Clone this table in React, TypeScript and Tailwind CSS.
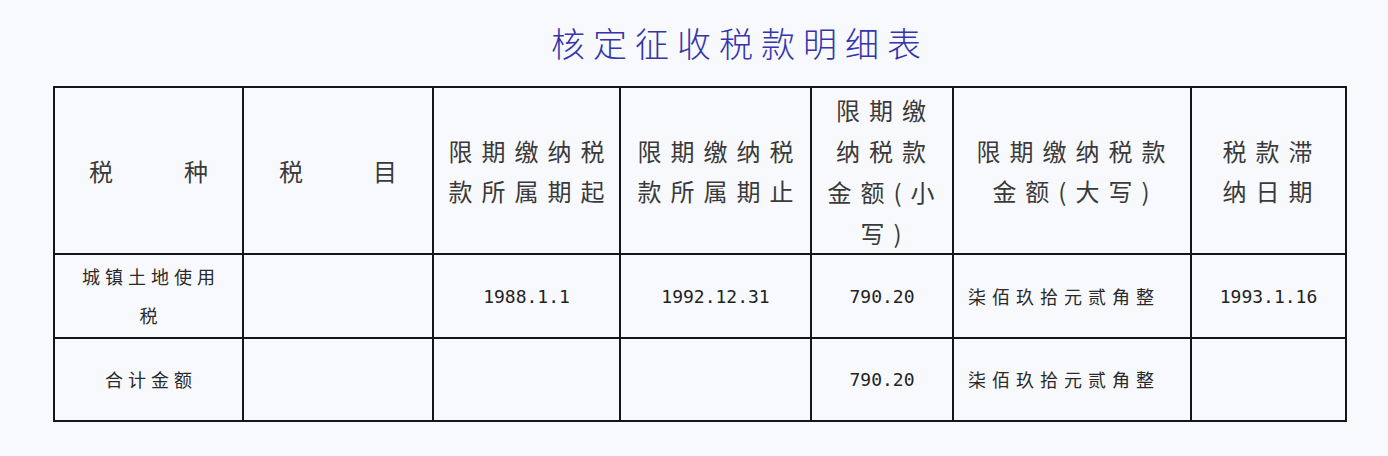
const cjk = "font-['Noto_Sans_CJK_SC','Noto_Sans',sans-serif]"
const mono = "font-['DejaVu_Sans_Mono',monospace]"

const edge = "border-r-2 border-b-2 border-[#161616] flex items-center"
const cell = `${edge} justify-center`

function Lines({ lines, className }: { lines: string[]; className: string }) {
  return (
    <div className={`text-center ${className}`}>
      {lines.map((l) => (
        <div key={l}>{l}</div>
      ))}
    </div>
  )
}

export default function App() {
  const head = `${cjk} text-[24px] leading-[40px] tracking-[9px] text-[#3a3a3a]`
  const pair = `${cjk} text-[24px] text-[#3a3a3a]`
  const body = `${cjk} text-[18px] leading-[39px] tracking-[5px] text-[#2a2a2a]`
  const num = `${mono} text-[18px] text-[#222]`

  return (
    <div className="w-[1388px] h-[456px] bg-[#f8f9fd]">
      <div className="h-[86px] flex items-center justify-center pl-[92px] pb-[2px]">
        <h1 className={`${cjk} font-light text-[34px] tracking-[8px] text-[#3434ac]`}>
          核定征收税款明细表
        </h1>
      </div>

      <div className="ml-[53px] w-fit border-l-2 border-t-2 border-[#161616] grid grid-cols-[189px_190px_187px_191px_142px_238px_155px] grid-rows-[167px_84px_83px]">
        {/* header row */}
        <div className={`${edge} justify-between px-[34px] ${pair}`}>
          <span>税</span>
          <span>种</span>
        </div>
        <div className={`${edge} justify-between px-[35px] ${pair}`}>
          <span>税</span>
          <span>目</span>
        </div>
        <div className={cell}>
          <Lines lines={["限期缴纳税", "款所属期起"]} className={`${head} -mr-[9px]`} />
        </div>
        <div className={cell}>
          <Lines lines={["限期缴纳税", "款所属期止"]} className={`${head} -mr-[9px]`} />
        </div>
        <div className={cell}>
          <Lines lines={["限期缴", "纳税款", "金额(小", "写)"]} className={`${head} tracking-[7px] leading-[41px] -mr-[7px]`} />
        </div>
        <div className={cell}>
          <Lines lines={["限期缴纳税款", "金额(大写)"]} className={`${head} tracking-[7px] -mr-[7px]`} />
        </div>
        <div className={cell}>
          <Lines lines={["税款滞", "纳日期"]} className={`${head} tracking-[7px] -mr-[7px]`} />
        </div>

        {/* data row */}
        <div className={cell}>
          <Lines lines={["城镇土地使用", "税"]} className={`${body} -mr-[5px]`} />
        </div>
        <div className={cell} />
        <div className={cell}>
          <span className={num}>1988.1.1</span>
        </div>
        <div className={cell}>
          <span className={num}>1992.12.31</span>
        </div>
        <div className={cell}>
          <span className={num}>790.20</span>
        </div>
        <div className={`${edge} justify-start pl-[14px]`}>
          <span className={`${body} tracking-[6px]`}>柒佰玖拾元贰角整</span>
        </div>
        <div className={cell}>
          <span className={num}>1993.1.16</span>
        </div>

        {/* total row */}
        <div className={cell}>
          <span className={`${body} -mr-[5px]`}>合计金额</span>
        </div>
        <div className={cell} />
        <div className={cell} />
        <div className={cell} />
        <div className={cell}>
          <span className={num}>790.20</span>
        </div>
        <div className={`${edge} justify-start pl-[14px]`}>
          <span className={`${body} tracking-[6px]`}>柒佰玖拾元贰角整</span>
        </div>
        <div className={cell} />
      </div>
    </div>
  )
}
